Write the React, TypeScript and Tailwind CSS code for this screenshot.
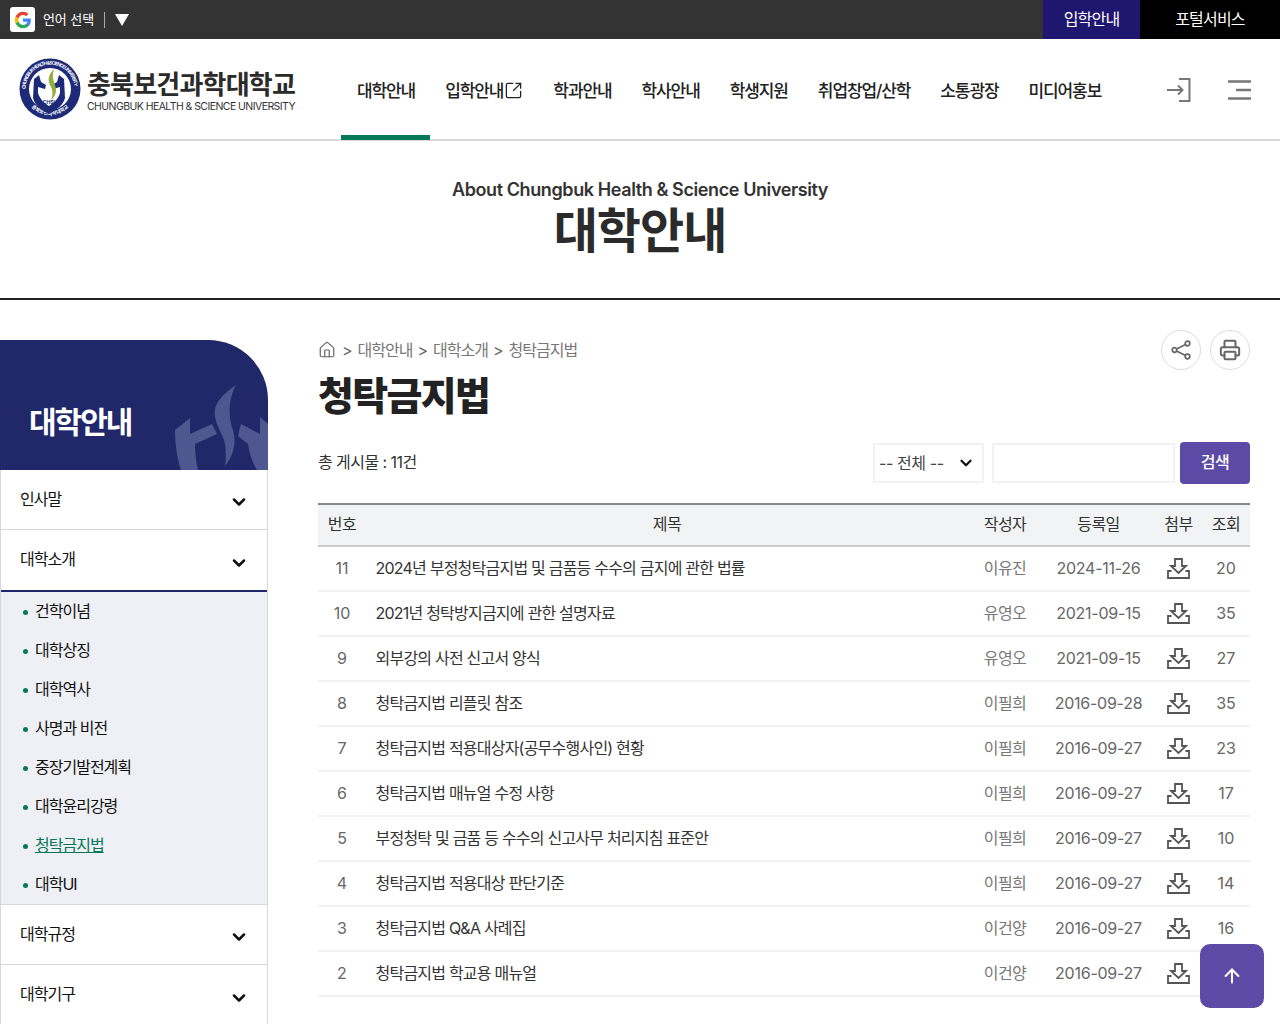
import { ChevronDown, ArrowUp, Printer, Home, SquareArrowOutUpRight } from "lucide-react";

const navItems = ["대학안내", "입학안내", "학과안내", "학사안내", "학생지원", "취업창업/산학", "소통광장", "미디어홍보"];
const subItems = ["건학이념", "대학상징", "대학역사", "사명과 비전", "중장기발전계획", "대학윤리강령", "청탁금지법", "대학UI"];

const rows = [
  { no: 11, title: "2024년 부정청탁금지법 및 금품등 수수의 금지에 관한 법률", author: "이유진", date: "2024-11-26", views: 20 },
  { no: 10, title: "2021년 청탁방지금지에 관한 설명자료", author: "유영오", date: "2021-09-15", views: 35 },
  { no: 9, title: "외부강의 사전 신고서 양식", author: "유영오", date: "2021-09-15", views: 27 },
  { no: 8, title: "청탁금지법 리플릿 참조", author: "이필희", date: "2016-09-28", views: 35 },
  { no: 7, title: "청탁금지법 적용대상자(공무수행사인) 현황", author: "이필희", date: "2016-09-27", views: 23 },
  { no: 6, title: "청탁금지법 매뉴얼 수정 사항", author: "이필희", date: "2016-09-27", views: 17 },
  { no: 5, title: "부정청탁 및 금품 등 수수의 신고사무 처리지침 표준안", author: "이필희", date: "2016-09-27", views: 10 },
  { no: 4, title: "청탁금지법 적용대상 판단기준", author: "이필희", date: "2016-09-27", views: 14 },
  { no: 3, title: "청탁금지법 Q&A 사례집", author: "이건양", date: "2016-09-27", views: 16 },
  { no: 2, title: "청탁금지법 학교용 매뉴얼", author: "이건양", date: "2016-09-27", views: 27 },
];

function Emblem() {
  return (
    <svg width="62" height="62" viewBox="0 0 62 62" className="shrink-0">
      <circle cx="31" cy="31" r="30.500" fill="#1d2a78" />
      <path id="ring-top" d="M31 31m-24.500 0a24.500 24.500 0 1 1 49 0" fill="none" />
      <path id="ring-bottom" d="M5 31a26 26 0 0 0 52 0" fill="none" />
      <text fontSize="4.800" fontWeight="700" fill="#fff" textLength="74">
        <textPath href="#ring-top">CHUNGBUK HEALTH &amp; SCIENCE UNIVERSITY</textPath>
      </text>
      <text fontSize="5" fontWeight="700" fill="#fff" textAnchor="middle">
        <textPath href="#ring-bottom" startOffset="50%">충북보건과학대학교</textPath>
      </text>
      <circle cx="31" cy="31" r="21" fill="#fff" />
      <path d="M15 21l5-4 2 7 5 3-1 4-7-2v6c2 6 6 10 11 13 5-3 9-7 11-13v-6l-7 2-1-4 5-3 2-7 5 4 1 19c-2 8-9 12-16 16-7-4-14-8-16-16z" fill="#1d2a78" />
      <path d="M35 11c-7 7-6 13-3 18 2 4 2 8 0 13 5-4 6-10 4-15-2-5-3-10-1-16z" fill="#8fae3c" />
      <text x="31" y="46" textAnchor="middle" fontSize="5" fontWeight="700" fill="#1d2a78">CHSU</text>
    </svg>
  );
}

function Watermark() {
  return (
    <svg width="93" height="90" viewBox="0 0 93 90" className="absolute left-[175px] bottom-0" fill="#4f5790">
      <path d="M61 5C48 14 38 24 40 36c1 10 8 18 10 28 1 8 1 16 0 22 8-10 12-22 8-36-4-12-6-28 3-45z" />
      <path d="M0 50l15-12v16l22-10 5 10-22 10c0 8 1 18 3 26H6C2 78 0 64 0 50z" />
      <path d="M85 37l8 7v46H82c-5-8-8-18-9-26l-10-8 3-12 19 10z" />
    </svg>
  );
}

function DownloadIcon() {
  return (
    <svg width="23" height="21" viewBox="0 0 23 21" fill="none" stroke="#555" strokeWidth="1.800" className="mx-auto">
      <path d="M8 1h7v7h4l-7.500 7L4 8h4z" />
      <path d="M4.500 13H1v7h21v-7h-3.500" />
    </svg>
  );
}

function ShareIcon() {
  return (
    <svg width="20" height="20" viewBox="0 0 20 20" fill="none" stroke="#666" strokeWidth="1.700">
      <circle cx="16.500" cy="3.500" r="2.300" />
      <circle cx="3.500" cy="10" r="2.300" />
      <circle cx="16.500" cy="16.500" r="2.300" />
      <path d="M14.500 4.600l-9 4.300M5.500 11.100l9 4.300" />
    </svg>
  );
}

function SideRow({ label, className }: { label: string; className: string }) {
  return (
    <div className={`flex items-center justify-between pb-[2px] pl-[19px] pr-[18px] text-[16px] tracking-[-1px] text-[#111] ${className}`}>
      {label}
      <ChevronDown size={20} strokeWidth={3} className="mt-[7px] text-[#111]" />
    </div>
  );
}

export default function App() {
  return (
    <div className="relative h-[1024px] overflow-hidden bg-white font-['Inter','Noto_Sans_CJK_KR',sans-serif] text-[#222]">
      {/* top bar */}
      <div className="flex h-[39px] items-center bg-[#333]">
        <div className="ml-[10px] flex h-[25px] w-[25px] items-center justify-center rounded-[3px] bg-white">
          <svg width="18" height="18" viewBox="0 0 48 48">
            <path fill="#4285F4" d="M45 24.500c0-1.600-.1-3.100-.4-4.500H24v8.500h11.800c-.5 2.700-2 5-4.400 6.600v5.500h7.100c4.200-3.800 6.500-9.500 6.500-16.100z" />
            <path fill="#34A853" d="M24 46c5.900 0 10.900-2 14.500-5.300l-7.100-5.500c-2 1.300-4.500 2.100-7.400 2.100-5.700 0-10.500-3.800-12.200-9H4.500v5.700C8.100 41.200 15.500 46 24 46z" />
            <path fill="#FBBC05" d="M11.800 28.300c-.9-2.700-.9-5.600 0-8.300v-5.700H4.500c-3 6-3 13.700 0 19.700z" />
            <path fill="#EA4335" d="M24 10.800c3.200 0 6.100 1.100 8.300 3.300l6.300-6.300C34.900 4.200 29.900 2 24 2 15.500 2 8.100 6.800 4.500 14.300l7.300 5.700c1.700-5.400 6.500-9.200 12.200-9.200z" />
          </svg>
        </div>
        <span className="ml-2 text-[13px] leading-none tracking-[-0.1px] text-white">언어 선택</span>
        <span className="ml-[10px] h-[16px] w-px bg-[#aaa]" />
        <span className="ml-[10px] h-0 w-0 border-x-[7px] border-t-[12px] border-x-transparent border-t-white" />
        <div className="ml-auto flex h-full">
          <div className="flex w-[97px] items-center justify-center bg-[#1f1670] pb-px text-[16px] tracking-[-0.8px] text-white">입학안내</div>
          <div className="flex w-[140px] items-center justify-center bg-black pb-px text-[16px] tracking-[-0.8px] text-white">포털서비스</div>
        </div>
      </div>

      {/* header */}
      <div className="flex h-[102px] items-start border-b-2 border-[#d5dadc]">
        <div className="ml-[19px] mt-[19px] flex w-[322px] items-center">
          <Emblem />
          <div className="ml-[6px] mt-[6px] flex flex-col">
            <span className="text-[26px] leading-[30px] font-bold tracking-[-0.8px] whitespace-nowrap text-[#2b2b2b]">충북보건과학대학교</span>
            <span className="text-[10.5px] leading-[14px] tracking-[-0.56px] whitespace-nowrap text-[#333]">CHUNGBUK HEALTH &amp; SCIENCE UNIVERSITY</span>
          </div>
        </div>
        <nav className="flex h-[101px] items-start">
          {navItems.map((item, i) => (
            <div
              key={item}
              className={`flex h-[101px] items-center text-[17px] font-medium tracking-[-1.1px] whitespace-nowrap text-[#222] ${i === 0 ? "border-b-[5px] border-[#047857] pl-4 pr-[15px] pt-[9px]" : "px-[15px] pt-[4px]"}`}
            >
              {item}
              {i === 1 && <SquareArrowOutUpRight size={19} strokeWidth={1.600} className="ml-px -mt-[3px]" />}
            </div>
          ))}
        </nav>
        <div className="ml-auto mr-[29px] mt-[39px] flex items-center gap-[37px] text-[#777]">
          <svg width="24" height="24" viewBox="0 0 24 24" fill="none" stroke="currentColor" strokeWidth="2">
            <path d="M0 12h15M11 7.500l4.500 4.500-4.500 4.500M12 1h10.500v22H12" />
          </svg>
          <svg width="23" height="20" viewBox="0 0 23 20" fill="none" stroke="currentColor" strokeWidth="2.400">
            <path d="M0 1.500h23M8 10h15M0 18.500h23" />
          </svg>
        </div>
      </div>

      {/* page title */}
      <div className="flex h-[159px] flex-col items-center border-b-2 border-[#222] pt-[38px]">
        <p className="-mt-px text-[18px] leading-[24px] font-semibold tracking-[-0.4px] text-[#333]">About Chungbuk Health &amp; Science University</p>
        <h1 className="mt-[2px] text-[48px] leading-[54px] font-bold tracking-[-1px] text-[#2b2b2b]">대학안내</h1>
      </div>

      <div className="mt-[40px] flex items-start">
        {/* side menu */}
        <aside className="w-[268px] shrink-0">
          <div className="relative h-[130px] overflow-hidden rounded-tr-[60px] bg-[#202869]">
            <Watermark />
            <h2 className="absolute left-[29px] top-[62px] text-[30px] leading-[40px] font-bold tracking-[-2px] text-white">대학안내</h2>
          </div>
          <div className="border-x border-[#d5d8dd]">
            <SideRow label="인사말" className="h-[60px] border-b border-[#d5d8dd]" />
            <SideRow label="대학소개" className="h-[62px] border-b-2 border-[#202869]" />
            <ul className="h-[312px] bg-[#eef0f5]">
              {subItems.map((item) => (
                <li key={item} className="flex h-[39px] items-center pb-[2px] pl-[22px] text-[16px] tracking-[-1px] text-[#111]">
                  <span className="mr-[7px] mt-[3px] h-[5px] w-[5px] rounded-full bg-[#047857]" />
                  <span className={item === "청탁금지법" ? "text-[#047857] underline" : ""}>{item}</span>
                </li>
              ))}
            </ul>
            <SideRow label="대학규정" className="h-[61px] border-y border-[#d5d8dd]" />
            <SideRow label="대학기구" className="h-[60px]" />
          </div>
        </aside>

        {/* content */}
        <main className="-mt-[10px] ml-[50px] w-[932px]">
          <div className="flex h-10 items-center justify-between">
            <div className="flex items-center text-[16px] tracking-[-1px] text-[#777]">
              <Home size={18} strokeWidth={1.600} className="text-[#666]" />
              <span className="ml-[6px] text-[#666]">&gt;</span>
              <span className="ml-[6px]">대학안내</span>
              <span className="ml-[5px] text-[#666]">&gt;</span>
              <span className="ml-[6px]">대학소개</span>
              <span className="ml-[5px] text-[#666]">&gt;</span>
              <span className="ml-[6px]">청탁금지법</span>
            </div>
            <div className="flex gap-[9px]">
              <button className="flex h-10 w-10 items-center justify-center rounded-full border border-[#ddd]">
                <ShareIcon />
              </button>
              <button className="flex h-10 w-10 items-center justify-center rounded-full border border-[#ddd] text-[#666]">
                <Printer size={22} strokeWidth={2.200} />
              </button>
            </div>
          </div>
          <h3 className="mt-px text-[39px] leading-[50px] font-extrabold tracking-[-1.600px] text-[#222]">청탁금지법</h3>

          <div className="mt-[21px] flex h-[42px] items-center">
            <span className="pb-[2px] text-[16px] tracking-[-0.55px] text-[#333]">총 게시물 : 11건</span>
            <div className="ml-auto flex h-10 w-[111px] items-center justify-between border-2 border-[#f2f2f2] pb-px pl-[4px] pr-[7px] text-[16px] tracking-[-0.4px] text-[#444]">
              -- 전체 --
              <ChevronDown size={18} strokeWidth={3} className="text-[#111]" />
            </div>
            <div className="ml-2 h-10 w-[183px] border-2 border-[#f2f2f2]" />
            <button className="ml-[5px] h-[42px] w-[70px] rounded-[4px] bg-[#5b4ba6] pb-[2px] text-[16px] font-medium tracking-[-0.5px] text-white">검색</button>
          </div>

          <table className="mt-[19px] w-full table-fixed border-collapse text-[16px]">
            <colgroup>
              <col className="w-[48px]" />
              <col />
              <col className="w-[74px]" />
              <col className="w-[113px]" />
              <col className="w-[47px]" />
              <col className="w-[48px]" />
            </colgroup>
            <thead>
              <tr className="h-[42px] border-t-2 border-b-2 border-t-[#888] border-b-[#ccc] bg-[#f1f3f5] text-[#333]">
                {["번호", "제목", "작성자", "등록일", "첨부", "조회"].map((h) => (
                  <th key={h} className="pb-[3px] font-normal tracking-[-0.5px]">{h}</th>
                ))}
              </tr>
            </thead>
            <tbody>
              {rows.map((r) => (
                <tr key={r.no} className="h-[45px] border-b-2 border-[#f2f2f2]">
                  <td className="pb-[2px] text-center text-[#666]">{r.no}</td>
                  <td className="pb-[2px] pl-[9.500px] tracking-[-0.78px] whitespace-nowrap text-[#333]">{r.title}</td>
                  <td className="pb-[2px] text-center tracking-[-0.5px] text-[#777]">{r.author}</td>
                  <td className="pb-[2px] text-center tracking-[-0.25px] text-[#666]">{r.date}</td>
                  <td>
                    <DownloadIcon />
                  </td>
                  <td className="pb-[2px] text-center text-[#666]">{r.views}</td>
                </tr>
              ))}
            </tbody>
          </table>
        </main>
      </div>

      {/* back to top */}
      <button className="absolute left-[1200px] top-[944px] flex h-16 w-16 items-center justify-center rounded-[10px] bg-[#5b4ba6] text-white">
        <ArrowUp size={22} strokeWidth={2.200} />
      </button>
    </div>
  );
}
